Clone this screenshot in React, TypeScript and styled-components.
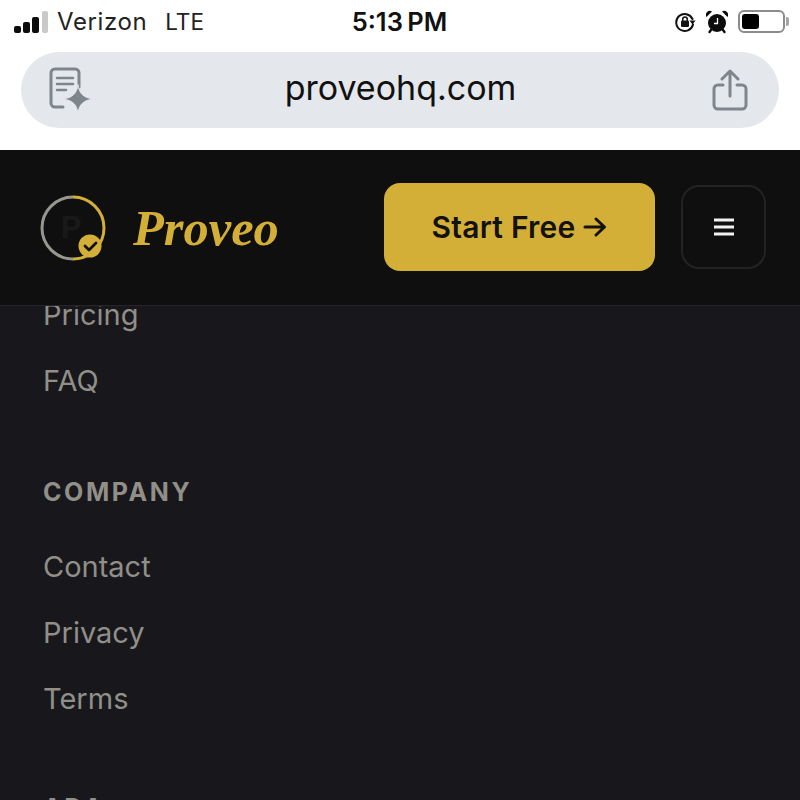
import React from 'react';
import styled, { createGlobalStyle } from 'styled-components';

const GlobalStyle = createGlobalStyle`
  html, body {
    margin: 0;
    padding: 0;
    background: #18181c;
  }
`;

const Screen = styled.div`
  width: 800px;
  height: 800px;
  overflow: hidden;
  display: flex;
  flex-direction: column;
  font-family: Inter, "Liberation Sans", sans-serif;
`;

const Browser = styled.div`
  height: 150px;
  flex-shrink: 0;
  background: #ffffff;
  display: flex;
  flex-direction: column;
`;

const StatusBar = styled.div`
  height: 43px;
  padding: 0 15px 0 14px;
  display: grid;
  grid-template-columns: 1fr auto 1fr;
  align-items: center;
  color: #111;
`;

const Carrier = styled.div`
  display: flex;
  align-items: center;
  gap: 9px;
  font-size: 24px;
  color: #222;
`;

const Signal = styled.div`
  display: flex;
  align-items: flex-end;
  gap: 2.700px;
`;

const SignalBar = styled.span<{ $h: number; $off?: boolean }>`
  width: 6.500px;
  height: ${(p) => p.$h}px;
  border-radius: 2px;
  background: ${(p) => (p.$off ? '#c9c9c9' : '#0c0c0c')};
`;

const CarrierName = styled.span`
  margin-right: 9px;
  letter-spacing: 0.600px;
`;

const Lte = styled.span`
  font-size: 22.500px;
`;

const Clock = styled.div`
  font-size: 25.500px;
  font-weight: 600;
  word-spacing: -2px;
`;

const StatusIcons = styled.div`
  display: flex;
  align-items: center;
  justify-content: flex-end;
  gap: 10px;
`;

const Battery = styled.div`
  width: 47px;
  height: 23px;
  box-sizing: border-box;
  border: 2px solid #8c8c8c;
  border-radius: 6px;
  padding: 2px;
  position: relative;
  &::after {
    content: '';
    position: absolute;
    right: -6px;
    top: 5px;
    width: 3px;
    height: 9px;
    border-radius: 0 2px 2px 0;
    background: #a5a5a5;
  }
`;

const BatteryFill = styled.div`
  width: 17px;
  height: 100%;
  background: #000;
  border-radius: 3px;
`;

const UrlBar = styled.div`
  margin: 9px 21px 0 21px;
  height: 76px;
  border-radius: 38px;
  background: #e4e7eb;
  display: flex;
  align-items: center;
  justify-content: space-between;
  padding: 0 31px 0 27px;
`;

const Address = styled.div`
  font-size: 34px;
  line-height: 70px;
  margin: 0 5px 4px 0;
  color: #111;
`;

const Header = styled.header`
  height: 156px;
  flex-shrink: 0;
  box-sizing: border-box;
  background: #0f0f0f;
  border-bottom: 1px solid #26262a;
  padding: 0 34px 2px 40px;
  display: flex;
  align-items: center;
  justify-content: space-between;
`;

const Brand = styled.div`
  display: flex;
  align-items: center;
  gap: 27px;
  padding-top: 3px;
`;

const BrandName = styled.span`
  font-family: "Liberation Serif", serif;
  font-style: italic;
  font-weight: 700;
  font-size: 50.500px;
  color: #d4af37;
`;

const Actions = styled.div`
  display: flex;
  align-items: center;
  gap: 26px;
`;

const StartButton = styled.button`
  width: 271px;
  height: 88px;
  border: none;
  border-radius: 16px;
  background: #d4af37;
  color: #141210;
  font-family: Inter, "Liberation Sans", sans-serif;
  font-size: 30px;
  font-weight: 600;
  letter-spacing: 0.200px;
  display: flex;
  align-items: center;
  justify-content: center;
  gap: 8px;
`;

const MenuButton = styled.button`
  width: 85px;
  height: 84px;
  box-sizing: border-box;
  background: #0f0f0f;
  border: 2px solid #232323;
  border-radius: 18px;
  display: flex;
  align-items: center;
  justify-content: center;
  padding: 0;
`;

const Footer = styled.footer`
  flex: 1;
  min-height: 0;
  overflow: hidden;
  background: #18181c;
  padding: 0 43px;
`;

const LinkList = styled.ul`
  list-style: none;
  margin: 0;
  padding: 0;
  display: flex;
  flex-direction: column;
  gap: 33px;
`;

const FooterLink = styled.li`
  font-size: 29px;
  line-height: 33px;
  color: #918f88;
  height: 33px;
`;

const TopList = styled(LinkList)`
  margin-top: -8px;
`;

const SectionTitle = styled.h4`
  margin: 80px 0 43px;
  font-size: 25px;
  line-height: 30px;
  font-weight: 700;
  letter-spacing: 2.600px;
  color: #918f88;
`;

const LastTitle = styled(SectionTitle)`
  margin-top: 78px;
`;

const StatusDocIcon = () => (
  <svg width="46" height="46" viewBox="0 0 46 46" fill="none" stroke="#7e868c" strokeWidth="3" strokeLinecap="round" strokeLinejoin="round">
    <path d="M15 40H7a4 4 0 0 1-4-4V6a4 4 0 0 1 4-4h20a4 4 0 0 1 4 4v14" />
    <path d="M9 11h16M9 17h16M9 23h9" strokeWidth="2.500" />
    <path d="M30 18c1.500 9 5.500 12.500 15 14-9.500 1.500-13.500 5-15 14-1.500-9-5.500-12.500-15-14 9.500-1.500 13.500-5 15-14z" fill="#7e868c" stroke="#e4e7eb" strokeWidth="1" />
  </svg>
);

const ShareIcon = () => (
  <svg width="36" height="42" viewBox="0 0 36 42" fill="none" stroke="#7e868c" strokeWidth="3" strokeLinecap="round" strokeLinejoin="round">
    <path d="M11 16H6a4 4 0 0 0-4 4v16a4 4 0 0 0 4 4h24a4 4 0 0 0 4-4V20a4 4 0 0 0-4-4h-5" />
    <path d="M18 27V3M10 10l8-8 8 8" />
  </svg>
);

const RotationLockIcon = () => (
  <svg width="22" height="22" viewBox="0 0 22 22" fill="none">
    <path d="M18.500 8A8.500 8.500 0 1 0 19 13.500" stroke="#111" strokeWidth="2" strokeLinecap="round" />
    <path d="M15.500 9.500h6l-3 4z" fill="#111" />
    <rect x="7" y="9.500" width="8" height="6.500" rx="1.200" fill="#111" />
    <path d="M8.700 10V8.200a2.300 2.300 0 0 1 4.600 0V10" stroke="#111" strokeWidth="1.500" />
  </svg>
);

const AlarmIcon = () => (
  <svg width="22" height="24" viewBox="0 0 22 24">
    <circle cx="11" cy="13" r="9" fill="#0c0c0c" />
    <path d="M0.500 7a4 4 0 0 1 5.500-5.500zM21.500 7a4 4 0 0 0-5.500-5.500z" fill="#0c0c0c" />
    <path d="M5 20L3.500 22M17 20l1.500 2" stroke="#0c0c0c" strokeWidth="2.400" strokeLinecap="round" />
    <path d="M11.500 8V13.500H8" stroke="#ffffff" strokeWidth="1.300" fill="none" />
  </svg>
);

const LogoMark = () => (
  <svg width="66" height="66" viewBox="0 0 66 66" fill="none">
    <path d="M33 2A31 31 0 0 0 33 64" stroke="#97978f" strokeWidth="3" />
    <path d="M33 2A31 31 0 0 1 33 64" stroke="#d4af37" strokeWidth="3" />
    <text x="31" y="43" textAnchor="middle" fontFamily="Liberation Sans, sans-serif" fontSize="31" fontWeight="700" fill="#191919">P</text>
    <circle cx="50" cy="51" r="11.500" fill="#d4af37" />
    <path d="M45 51l4 4 7-7" stroke="#0f0f0f" strokeWidth="2.800" strokeLinecap="round" strokeLinejoin="round" />
  </svg>
);

const ArrowIcon = () => (
  <svg width="24" height="22" viewBox="0 0 24 22" fill="none" stroke="#141210" strokeWidth="3" strokeLinecap="round" strokeLinejoin="round">
    <path d="M2 11h19M13 3l8.500 8-8.500 8" />
  </svg>
);

const HamburgerIcon = () => (
  <svg width="20" height="18" viewBox="0 0 20 18" fill="none" stroke="#f2f2f2" strokeWidth="3">
    <path d="M0 2h20M0 9h20M0 16h20" />
  </svg>
);

const App: React.FC = () => {
  return (
    <>
      <GlobalStyle />
      <Screen>
        <Browser>
          <StatusBar>
            <Carrier>
              <Signal>
                <SignalBar $h={7} />
                <SignalBar $h={11} />
                <SignalBar $h={16} />
                <SignalBar $h={22} $off />
              </Signal>
              <CarrierName>Verizon</CarrierName>
              <Lte>LTE</Lte>
            </Carrier>
            <Clock>5:13 PM</Clock>
            <StatusIcons>
              <RotationLockIcon />
              <AlarmIcon />
              <Battery>
                <BatteryFill />
              </Battery>
            </StatusIcons>
          </StatusBar>
          <UrlBar>
            <StatusDocIcon />
            <Address>proveohq.com</Address>
            <ShareIcon />
          </UrlBar>
        </Browser>
        <Header>
          <Brand>
            <LogoMark />
            <BrandName>Proveo</BrandName>
          </Brand>
          <Actions>
            <StartButton>
              Start Free <ArrowIcon />
            </StartButton>
            <MenuButton>
              <HamburgerIcon />
            </MenuButton>
          </Actions>
        </Header>
        <Footer>
          <TopList>
            <FooterLink>Pricing</FooterLink>
            <FooterLink>FAQ</FooterLink>
          </TopList>
          <SectionTitle>COMPANY</SectionTitle>
          <LinkList>
            <FooterLink>Contact</FooterLink>
            <FooterLink>Privacy</FooterLink>
            <FooterLink>Terms</FooterLink>
          </LinkList>
          <LastTitle>ADA</LastTitle>
        </Footer>
      </Screen>
    </>
  );
};

export default App;
